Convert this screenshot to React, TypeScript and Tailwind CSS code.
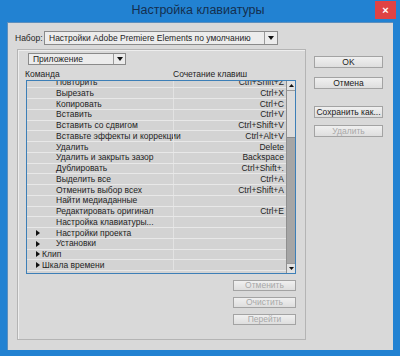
import React from "react";

type Row = { t: string; k?: string; arrow?: boolean; lvl: 1 | 2 };

const rows: Row[] = [
  { t: "Повторить", k: "Ctrl+Shift+Z", lvl: 2 },
  { t: "Вырезать", k: "Ctrl+X", lvl: 2 },
  { t: "Копировать", k: "Ctrl+C", lvl: 2 },
  { t: "Вставить", k: "Ctrl+V", lvl: 2 },
  { t: "Вставить со сдвигом", k: "Ctrl+Shift+V", lvl: 2 },
  { t: "Вставьте эффекты и коррекции", k: "Ctrl+Alt+V", lvl: 2 },
  { t: "Удалить", k: "Delete", lvl: 2 },
  { t: "Удалить и закрыть зазор", k: "Backspace", lvl: 2 },
  { t: "Дублировать", k: "Ctrl+Shift+.", lvl: 2 },
  { t: "Выделить все", k: "Ctrl+A", lvl: 2 },
  { t: "Отменить выбор всех", k: "Ctrl+Shift+A", lvl: 2 },
  { t: "Найти медиаданные", lvl: 2 },
  { t: "Редактировать оригинал", k: "Ctrl+E", lvl: 2 },
  { t: "Настройка клавиатуры...", lvl: 2 },
  { t: "Настройки проекта", arrow: true, lvl: 2 },
  { t: "Установки", arrow: true, lvl: 2 },
  { t: "Клип", arrow: true, lvl: 1 },
  { t: "Шкала времени", arrow: true, lvl: 1 },
];

const Tri = ({ dir }: { dir: "down" | "right" }) => {
  const pts = dir === "down" ? "0,0 6,0 3,4" : "0,0 4,3 0,6";
  const w = dir === "right" ? 4 : 6;
  const h = dir === "right" ? 6 : 4;
  return (
    <svg width={w} height={h} viewBox={`0 0 ${w} ${h}`} className="block">
      <polygon points={pts} fill="#111" />
    </svg>
  );
};

const Btn = ({ label, disabled, w = "w-[69px]", h = "h-[12px]" }: { label: string; disabled?: boolean; w?: string; h?: string }) => (
  <div
    className={`${w} ${h} flex items-center justify-center border border-[#a3a3a3] bg-gradient-to-b from-[#f0f0f0] to-[#dedede] text-[8.5px] leading-none ${
      disabled ? "text-[#a8a8a8]" : "text-[#1a1a1a]"
    }`}
  >
    {label}
  </div>
);

export default function App() {
  return (
    <div
      className="w-[400px] h-[356px] bg-[#2282d2] flex flex-col overflow-hidden"
      style={{ fontFamily: '"Liberation Sans", Arial, sans-serif' }}
    >
      {/* title bar */}
      <div className="h-[22px] flex items-start">
        <div className="flex-1" />
        <div className="pt-[4px] text-[12.5px] leading-none text-[#142f4f] whitespace-nowrap">
          Настройка клавиатуры
        </div>
        <div className="flex-1 flex justify-end pr-[4px]">
          <div className="mt-[1px] w-[21px] h-[18px] bg-[#e04343] flex items-center justify-center text-white text-[11px] font-bold leading-none">
            ×
          </div>
        </div>
      </div>

      {/* body */}
      <div className="flex-1 mx-[7px] mb-[6px] bg-[#d9d9d9] border-t border-l border-[#5d8fbd] flex flex-col text-[8.5px] text-[#1e1e1e] leading-none">
        {/* Набор row */}
        <div className="flex items-center mt-[8px] h-[14px]">
          <div className="ml-[7px] w-[28px]">Набор:</div>
          <div className="ml-[1px] w-[234px] h-[14px] border border-[#8a8a8a] bg-[#ececec] flex items-stretch">
            <div className="flex-1 flex items-center pl-[4px] whitespace-nowrap">
              Настройки Adobe Premiere Elements по умолчанию
            </div>
            <div className="w-[13px] border-l border-[#9a9a9a] flex items-center justify-center">
              <Tri dir="down" />
            </div>
          </div>
        </div>

        <div className="flex mt-[4px]">
          {/* group box */}
          <div className="ml-[9px] w-[289px] h-[291px] border border-[#b4b4b4] shadow-[inset_1px_1px_0_#eeeeee] flex flex-col">
            <div className="mt-[3px] ml-[10px] w-[98px] h-[12px] border border-[#8a8a8a] bg-[#ececec] flex items-stretch">
              <div className="flex-1 flex items-center pl-[4px]">Приложение</div>
              <div className="w-[12px] border-l border-[#9a9a9a] flex items-center justify-center">
                <Tri dir="down" />
              </div>
            </div>
            <div className="flex mt-[4px] h-[10px] items-center">
              <div className="ml-[7px] w-[148px]">Команда</div>
              <div>Сочетание клавиш</div>
            </div>

            {/* list */}
            <div className="mt-[1px] ml-[8px] w-[270px] h-[194px] border border-[#3d7fb7] bg-[#d3d3d3] flex overflow-hidden">
              <div className="flex-1 overflow-hidden">
                <div className="mt-[-3.5px] flex flex-col">
                  {rows.map((r, i) => (
                    <div
                      key={i}
                      className="h-[10.75px] flex items-center border-b border-[#e8e8e8] whitespace-nowrap"
                    >
                      <div className="w-[6px] shrink-0" />
                      <div className="w-[9px] shrink-0 flex justify-center">
                        {r.arrow ? <Tri dir="right" /> : null}
                      </div>
                      <div className={r.lvl === 2 ? "ml-[14px] w-[117px] shrink-0" : "ml-0 w-[131px] shrink-0"}>{r.t}</div>
                      <div className="self-stretch w-px bg-[#e2e2e2]" />
                      <div className="flex-1 text-right pr-[2px]">{r.k ?? ""}</div>
                    </div>
                  ))}
                </div>
              </div>
              {/* scrollbar */}
              <div className="w-[9px] flex flex-col bg-[#a6a6a6] border-l border-[#8f8f8f]">
                <div className="h-[10px] bg-[#e2e2e2] flex items-center justify-center border-b border-[#9a9a9a]">
                  <svg width="5" height="3" viewBox="0 0 5 3"><polygon points="0,3 5,3 2.5,0" fill="#111" /></svg>
                </div>
                <div className="h-[47px] bg-[#dcdcdc] border-b border-[#8a8a8a]" />
                <div className="flex-1" />
                <div className="h-[10px] bg-[#e2e2e2] flex items-center justify-center border-t border-[#9a9a9a]">
                  <svg width="5" height="3" viewBox="0 0 5 3"><polygon points="0,0 5,0 2.5,3" fill="#111" /></svg>
                </div>
              </div>
            </div>

            {/* lower buttons */}
            <div className="flex flex-col items-end mr-[9px] mt-[6px] gap-[6px]">
              <Btn label="Отменить" disabled w="w-[63px]" h="h-[11px]" />
              <Btn label="Очистить" disabled w="w-[63px]" h="h-[11px]" />
              <Btn label="Перейти" disabled w="w-[63px]" h="h-[11px]" />
            </div>
          </div>

          {/* right buttons */}
          <div className="ml-[8px] mt-[7px] flex flex-col">
            <Btn label="OK" />
            <div className="mt-[9px]"><Btn label="Отмена" /></div>
            <div className="mt-[17px]"><Btn label="Сохранить как..." /></div>
            <div className="mt-[7px]"><Btn label="Удалить" disabled /></div>
          </div>
        </div>
      </div>
    </div>
  );
}
